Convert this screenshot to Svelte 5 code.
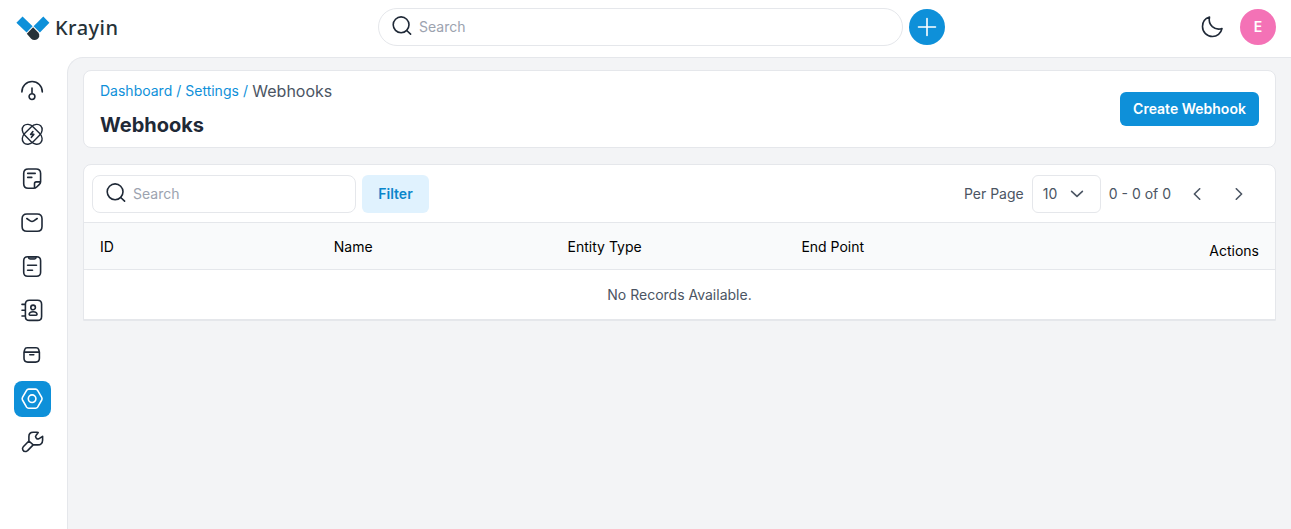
<script>
  const nav = [
    { name: 'Dashboard', d: 'M1.9 12.9A10.2 10.4 0 0 1 22.3 12.9M12 9V14.7M9.1 17.6a2.9 2.9 0 1 0 5.8 0a2.9 2.9 0 1 0-5.8 0' },
    { name: 'Leads', atom: true, d: 'M12.9 8.6L10.6 11.4H13.8L11.4 14.3' },
    { name: 'Quotes', d: 'M20.6 14.7V6.5Q20.6 2 16.1 2H8.2Q3.7 2 3.7 6.5V16.8Q3.7 21.3 8.2 21.3H13.6Q15.4 21.3 16.7 20L19.4 17.4Q20.6 16.2 20.6 14.7ZM20.4 14.9H16.3Q14.5 14.9 14.5 16.7V21.1M7.7 6.4H15.2M7.7 10.4H11.8' },
    { name: 'Mail', d: 'M7 3H17.2Q22 3 22 7.8V15.5Q22 20.3 17.2 20.3H7Q2.1 20.3 2.1 15.5V7.8Q2.1 3 7 3ZM6.8 7.5L10.2 9.9Q12 11.2 13.8 9.9L17.2 7.5' },
    { name: 'Activities', clip: true, d: 'M7.7 1.8H16.6Q20.6 1.8 20.6 5.8V17.3Q20.6 21.3 16.6 21.3H7.7Q3.7 21.3 3.7 17.3V5.8Q3.7 1.8 7.7 1.8ZM7.6 10.3H16.5M7.6 15.3H12.5' },
    { name: 'Contacts', d: 'M9.4 1.2H17.6Q21.6 1.2 21.6 5.2V17.4Q21.6 21.4 17.6 21.4H9.4Q5.4 21.4 5.4 17.4V5.2Q5.4 1.2 9.4 1.2ZM2 5.4H5.4M2 11.3H5.4M2 17H5.4M10.8 8.4a2.3 2.3 0 1 0 4.6 0a2.3 2.3 0 1 0-4.6 0M9.2 15.7Q8.9 12.8 13.1 12.8Q17.3 12.8 17 15.7Q16.9 16.2 16.2 16.2H10Q9.3 16.2 9.2 15.7Z' },
    { name: 'Products', d: 'M7.2 4.7H16.1Q18.1 4.7 18.7 6.6L19.4 9.1V15.3Q19.4 19.1 15.6 19.1H7.8Q4 19.1 4 15.3V9.1L4.7 6.6Q5.2 4.7 7.2 4.7ZM4 9.1H19.4M9.8 11.8H13.8' },
    { name: 'Settings', active: true, d: 'M8.6 2.1H15.6Q16.9 2.1 17.6 3.3L21.7 10.4Q22.4 11.7 21.7 13L17.6 20.1Q16.9 21.2 15.6 21.2H8.6Q7.3 21.2 6.6 20.1L2.5 13Q1.8 11.7 2.5 10.4L6.6 3.3Q7.3 2.1 8.6 2.1ZM8.3 11.7a3.8 3.8 0 1 0 7.6 0a3.8 3.8 0 1 0-7.6 0' },
    { name: 'Configuration', d: 'M16.7 1.2H13.2Q8.9 1.2 8.9 5.5V10L3.3 15.8Q2 17.2 2.8 18.8Q3.8 20.9 6.1 20.5Q7 20.3 7.6 19.6L13.2 13.9H17.7Q22.4 13.9 22.6 9.2V5.3L18.7 7.8Q17.5 8.4 16.5 7.4L16 6.7Q15.1 5.6 16 4.5L18.2 1.6ZM8.9 10L13.2 13.9' }
  ];
  const columns = ['ID', 'Name', 'Entity Type', 'End Point'];
</script>

{#snippet searchIcon()}
  <svg class="mag" width="20" height="20" viewBox="0 0 20 20"><circle cx="9.1" cy="8.8" r="7.9" /><path d="M14.7 14.5L18.6 18.2" /></svg>
{/snippet}

<header>
  <a class="logo" href="#home" aria-label="Krayin">
    <svg width="104" height="30" viewBox="0 0 104 30">
      <path fill="#0e90d9" d="M6.5 2.4L16.6 12.2L10.6 18.4L.4 8.7ZM27.3 2.4L33.4 8.7L23.9 18.4L17.6 12.2Z" />
      <path fill="#263238" d="M17.1 13.3L22.2 18.4Q23.7 20 23.2 22.5Q22.2 25.9 18.4 26Q16.5 26 15.2 24.7L10.8 19.7Z" />
      <text x="39" y="20.8" textLength="63">Krayin</text>
    </svg>
  </a>
  <div class="mega">
    <label class="search round">{@render searchIcon()}<input placeholder="Search" /></label>
    <button class="plus" aria-label="Add"><svg width="20" height="20" viewBox="0 0 20 20"><path d="M10 1.5V18.5M1.5 10H18.5" /></svg></button>
  </div>
  <div class="user">
    <svg class="moon" width="24" height="24" viewBox="0 0 24 24"><path d="M9.5 2.1C8.7 5.9 9.9 9.4 12.3 11.6C15.1 14 18.4 14.7 22 13.5C21 18.4 17 21.5 12.5 21.5C6.9 21.5 2.5 17.1 2.5 11.6C2.5 7.2 5.1 3.5 9.5 2.1Z" /></svg>
    <button class="avatar">E</button>
  </div>
</header>

<div class="shell">
  <nav>
    {#each nav as item}
      <a href="#nav" class:active={item.active} aria-label={item.name}>
        <svg width="24" height="24" viewBox="0 0 24 24">
          {#if item.atom}
            <rect class="orbit" x="0.2" y="5.4" width="24" height="11.8" rx="7.5" ry="5.9" transform="rotate(45 12.2 11.3)" />
            <rect class="orbit" x="0.2" y="5.4" width="24" height="11.8" rx="7.5" ry="5.9" transform="rotate(-45 12.2 11.3)" />
          {/if}
          {#if item.clip}
            <path class="clip" d="M8.4 1.8V2.3Q8.4 4 10.1 4H14.5Q16.2 4 16.2 2.3V1.8Z" />
          {/if}
          <path d={item.d} />
        </svg>
      </a>
    {/each}
  </nav>

  <main>
    <section class="card title">
      <div>
        <div class="crumbs"><a href="#dashboard">Dashboard</a><i>/</i><a href="#settings">Settings</a><i>/</i><span>Webhooks</span></div>
        <h1>Webhooks</h1>
      </div>
      <button class="create">Create Webhook</button>
    </section>

    <section class="card">
      <div class="toolbar">
        <label class="search">{@render searchIcon()}<input placeholder="Search" /></label>
        <button class="filter">Filter</button>
        <div class="pager">
          <span>Per Page</span>
          <button class="size">10<svg width="14" height="8" viewBox="0 0 14 8"><path d="M1.6 1.3L7 6.3L12.4 1.3" /></svg></button>
          <span>0 - 0 of 0</span>
          <button class="arrow prev" aria-label="Previous"><svg width="8" height="12" viewBox="0 0 8 12"><path d="M6.7 .8L1.4 6L6.7 11.2" /></svg></button>
          <button class="arrow" aria-label="Next"><svg width="8" height="12" viewBox="0 0 8 12"><path d="M1.3 .8L6.6 6L1.3 11.2" /></svg></button>
        </div>
      </div>
      <div class="head">
        {#each columns as c}<span>{c}</span>{/each}
        <span class="actions">Actions</span>
      </div>
      <div class="empty">No Records Available.</div>
    </section>
  </main>
</div>

<style>
  :global(body) { margin: 0; background: #fff; overflow: hidden; }
  :global(#app) { font: 14px/20px Inter, sans-serif; color: #4b5563; }
  * { box-sizing: border-box; }
  a { color: #0e90d9; text-decoration: none; }
  button { font: inherit; color: inherit; border: 0; padding: 0; background: none; display: flex; align-items: center; justify-content: center; }
  svg { display: block; flex: none; fill: none; stroke: currentColor; stroke-width: 1.6; stroke-linecap: round; stroke-linejoin: round; }
  header { height: 57px; display: flex; align-items: flex-start; justify-content: space-between; padding: 8px 15px 0 16px; }
  .logo { width: 362px; padding-top: 6px; }
  .logo svg { stroke: none; }
  .logo text { fill: #263238; font: 500 20px "Noto Sans", sans-serif; }
  .mega { display: flex; align-items: center; gap: 6px; width: 567px; }
  .search { display: flex; align-items: center; width: 264px; height: 38px; padding: 0 13px; gap: 7px; border: 1px solid #e5e7eb; border-radius: 8px; background: #fff; }
  .round { width: 525px; border-radius: 19px; }
  .mag { color: #1f2937; margin-top: -2px; }
  input { flex: 1; min-width: 0; border: 0; outline: 0; padding: 0; background: none; font: inherit; color: #4b5563; }
  input::placeholder { color: #9ca3af; opacity: 1; }
  .plus { width: 36px; height: 36px; border-radius: 50%; background: #0e90d9; color: #fff; }
  .user { width: 331px; display: flex; align-items: center; justify-content: flex-end; gap: 16px; padding-top: 1px; }
  .moon { color: #1f2937; }
  .avatar { width: 36px; height: 36px; border-radius: 50%; background: #f472b6; color: #fff; font-weight: 600; }
  .shell { display: flex; height: 472px; }
  nav { width: 67px; flex: none; padding: 16px 0 0 14px; display: flex; flex-direction: column; gap: 8px; }
  nav a { width: 37px; height: 36px; padding: 6px; border-radius: 8px; color: #1f2937; }
  nav .active { background: #0e90d9; color: #fff; }
  .orbit { stroke-width: 1.4; }
  .clip { fill: #9ca3af; stroke-width: 1.3; }
  main { flex: 1; padding: 12px 15px 0; background: #f3f4f6; border: solid #e5e7eb; border-width: 1px 0 0 1px; border-top-left-radius: 16px; display: flex; flex-direction: column; gap: 16px; }
  .card { background: #fff; border: 1px solid #e5e7eb; border-radius: 8px; }
  .card + .card { border-radius: 8px 8px 0 0; }
  .title { height: 78px; display: flex; align-items: center; justify-content: space-between; padding: 0 16px; }
  .crumbs { display: flex; align-items: center; height: 24px; }
  .crumbs i { font-style: normal; color: #0e90d9; margin: 0 4px; }
  .crumbs span { font-size: 16px; line-height: 24px; margin-left: .4px; }
  h1 { margin: 8px 0 0; font-size: 20px; line-height: 28px; font-weight: 700; color: #1f2937; }
  .create { height: 34px; width: 139px; border-radius: 6px; background: #0e90d9; color: #fff; font-weight: 600; }
  .toolbar { height: 57px; display: flex; align-items: center; padding: 0 20px 0 8px; }
  .filter { width: 67px; height: 38px; margin-left: 6px; border-radius: 6px; background: #e0f2fe; color: #0a86cb; font-weight: 600; }
  .pager { margin-left: auto; display: flex; align-items: center; gap: 8px; }
  .size { width: 69px; height: 38px; border: 1px solid #e5e7eb; border-radius: 6px; gap: 13px; padding-left: 10px; justify-content: flex-start; }
  .arrow { width: 32px; height: 32px; }
  .prev { margin: 0 2px 0 2px; }
  .head { display: grid; grid-template-columns: repeat(5, 1fr); gap: 10px; height: 48px; padding: 2px 16px 0; align-items: center; background: #f9fafb; border: solid #e5e7eb; border-width: 1px 0; color: #000; }
  .actions { text-align: right; padding-top: 8px; }
  .empty { height: 50px; display: flex; align-items: center; justify-content: center; border-bottom: 1px solid #e5e7eb; }
</style>
